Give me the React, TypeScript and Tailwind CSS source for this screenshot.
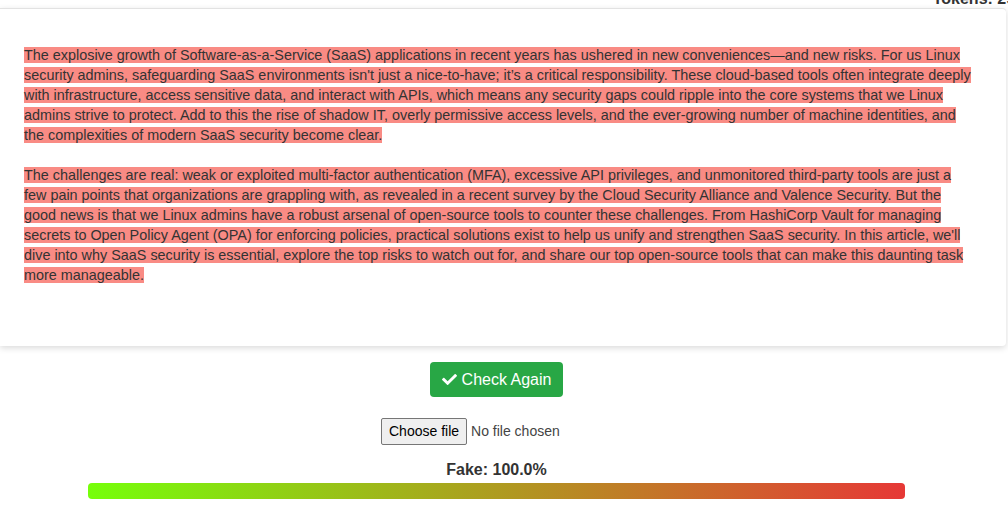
import React from "react";
import { FaCheck } from "react-icons/fa";

const para1 =
  "The explosive growth of Software-as-a-Service (SaaS) applications in recent years has ushered in new conveniences\u2014and new risks. For us Linux security admins, safeguarding SaaS environments isn't just a nice-to-have; it\u2019s a critical responsibility. These cloud-based tools often integrate deeply with infrastructure, access sensitive data, and interact with APIs, which means any security gaps could ripple into the core systems that we Linux admins strive to protect. Add to this the rise of shadow IT, overly permissive access levels, and the ever-growing number of machine identities, and the complexities of modern SaaS security become clear.";

const para2 =
  "The challenges are real: weak or exploited multi-factor authentication (MFA), excessive API privileges, and unmonitored third-party tools are just a few pain points that organizations are grappling with, as revealed in a recent survey by the Cloud Security Alliance and Valence Security. But the good news is that we Linux admins have a robust arsenal of open-source tools to counter these challenges. From HashiCorp Vault for managing secrets to Open Policy Agent (OPA) for enforcing policies, practical solutions exist to help us unify and strengthen SaaS security. In this article, we'll dive into why SaaS security is essential, explore the top risks to watch out for, and share our top open-source tools that can make this daunting task more manageable.";

export default function App() {
  return (
    <div className="h-[509px] w-[1008px] overflow-hidden bg-white font-['Liberation_Sans',Arial,sans-serif] text-[#333]">
      {/* header row, scrolled mostly out of view */}
      <div className="-mt-[11px] flex h-[19px] justify-end">
        <span className="-mr-[16px] text-[16px] font-bold leading-[19px] text-[#333]">Tokens: 298</span>
      </div>

      <div className="mr-[2px] rounded-r-[4px] border-t border-[#e2e2e2] bg-white pb-[61px] pl-[24px] pr-[34px] pt-[36px] shadow-[0_2px_6px_rgba(0,0,0,0.15)]">
        <p className="text-[14.4px] leading-[20px]">
          <span className="bg-[#f98b84]">{para1}</span>
        </p>
        <p className="mt-[20px] text-[14.4px] leading-[20px]">
          <span className="bg-[#f98b84]">{para2}</span>
        </p>
      </div>

      <div className="flex w-[993px] flex-col items-center">
        <button className="mt-[16px] flex h-[35px] items-center gap-[5px] rounded-[4px] bg-[#28a745] px-[12px] text-[16px] text-white">
          <FaCheck className="h-[15px] w-[15px]" />
          Check Again
        </button>

        <div className="mt-[21px] flex w-[231px] items-center text-[14px]">
          <span className="flex h-[27px] items-center rounded-[2px] border border-[#767676] bg-[#efefef] px-[7px] text-black">
            Choose file
          </span>
          <span className="ml-[4px] text-[#444]">No file chosen</span>
        </div>

        <div className="mt-[16px] text-[16px] font-bold leading-[18px] text-[#333]">Fake: 100.0%</div>
        <div className="mt-[4px] h-[16px] w-[817px] rounded-[4px] bg-[linear-gradient(to_right,#76ff0a,#e63836)]" />
      </div>
    </div>
  );
}
